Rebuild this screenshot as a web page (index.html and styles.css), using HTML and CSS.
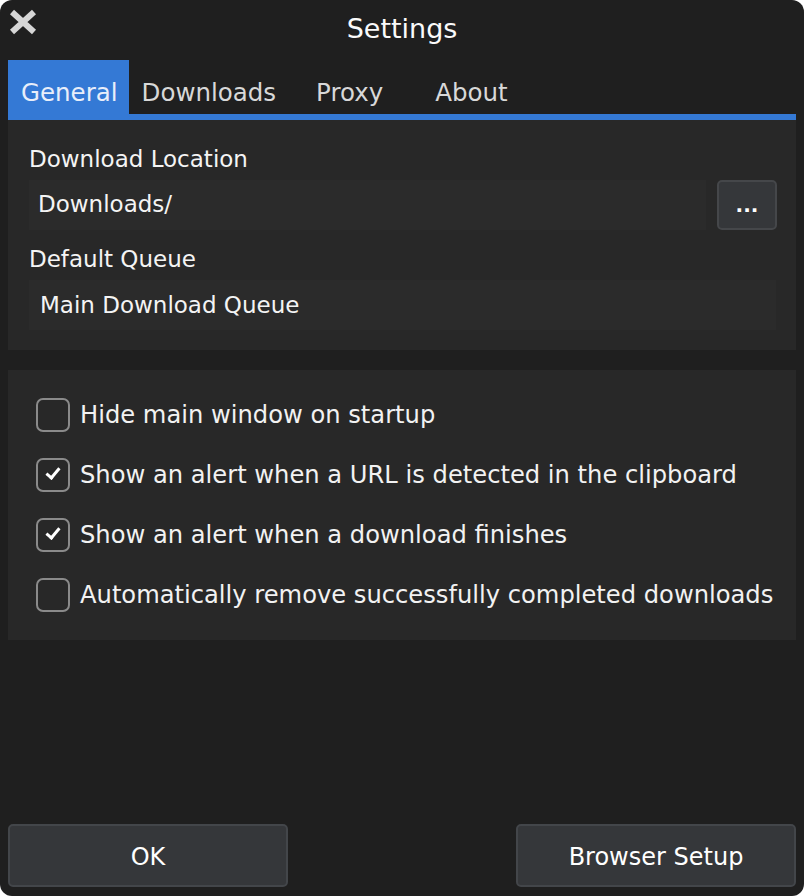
FILE: index.html
```html
<!DOCTYPE html>
<html lang="en">
<head>
    <meta charset="UTF-8" />
    <title>Settings</title>
    <link rel="stylesheet" href="styles.css">
</head>
<body>
<div class="window">
    <div class="titlebar">
        <span class="close">
            <svg width="30" height="26" viewBox="0 0 30 26"><path d="M4 3 L26 23 M26 3 L4 23" stroke="#d6d6d6" stroke-width="6" stroke-linecap="butt"/></svg>
        </span>
        <span class="title">Settings</span>
    </div>

    <div class="tabs">
        <span class="tab active">General</span>
        <span class="tab">Downloads</span>
        <span class="tab proxy">Proxy</span>
        <span class="tab about">About</span>
    </div>

    <div class="panel paths">
        <label>Download Location</label>
        <div class="row">
            <div class="field">Downloads/</div>
            <button class="browse">...</button>
        </div>
        <label>Default Queue</label>
        <div class="field queue">Main Download Queue</div>
    </div>

    <div class="panel options">
        <div class="check"><span class="box"></span>Hide main window on startup</div>
        <div class="check"><span class="box on"></span>Show an alert when a URL is detected in the clipboard</div>
        <div class="check"><span class="box on"></span>Show an alert when a download finishes</div>
        <div class="check"><span class="box"></span>Automatically remove successfully completed downloads</div>
    </div>

    <div class="spacer"></div>

    <div class="footer">
        <button class="btn">OK</button>
        <button class="btn">Browser Setup</button>
    </div>
</div>
</body>
</html>
```

FILE: styles.css
```css
html, body { margin: 0; padding: 0; background: #ffffff; }
body { font-family: "DejaVu Sans", Verdana, sans-serif; color: #f2f2f2; }
.window { width: 804px; height: 896px; background: #1f1f1f; border-radius: 12px; display: flex; flex-direction: column; box-sizing: border-box; padding: 0 8px 9px 8px; }

.titlebar { height: 60px; display: flex; align-items: center; justify-content: center; position: relative; }
.close { position: absolute; left: 0; top: 9px; }
.title { font-size: 27px; color: #fafafa; margin-top: -4px; }

.tabs { display: flex; height: 54px; border-bottom: 6px solid #3479d5; }
.tab { font-size: 24.5px; color: #d8d8d8; padding: 3px 13px 0 13px; line-height: 60px; }
.tab.active { background: #3479d5; color: #e8eefa; padding-right: 11px; }
.tab.proxy { margin-left: 14px; }
.tab.about { margin-left: 26px; }

.panel { background: #282828; }
.paths { padding: 24px 20px 20px 21px; height: 230px; box-sizing: border-box; }
.paths label { display: block; font-size: 23px; line-height: 30px; color: #f4f4f4; }
.row { display: flex; gap: 11px; margin: 6px 0 14px 0; }
.field { background: #2b2b2b; height: 50px; line-height: 48px; font-size: 23px; padding-left: 9px; flex: 1; color: #f4f4f4; }
.queue { margin-top: 6px; padding-left: 11px; line-height: 50px; }
.browse { width: 60px; height: 50px; background: #35373a; border: 2px solid #45474a; border-radius: 5px; color: #fff; font-size: 20px; font-weight: bold; font-family: inherit; padding: 0; margin-right: -1px; }

.options { margin-top: 20px; height: 270px; padding: 15px 0 0 28px; box-sizing: border-box; }
.check { display: flex; align-items: center; font-size: 24.2px; height: 60px; color: #f2f2f2; }
.box { width: 30px; height: 30px; border: 2px solid #8a8a8a; border-radius: 7px; margin-right: 10px; position: relative; flex: none; }
.box.on::after { content: ""; position: absolute; left: 11px; top: 5px; width: 5px; height: 11px; border: solid #ffffff; border-width: 0 3px 3px 0; transform: rotate(40deg); }

.spacer { flex: 1; }
.footer { display: flex; justify-content: space-between; }
.btn { width: 280px; height: 63px; background: #35373a; border: 2px solid #43464a; border-radius: 5px; color: #ffffff; font-family: inherit; font-size: 24px; padding-top: 3px; }
```
